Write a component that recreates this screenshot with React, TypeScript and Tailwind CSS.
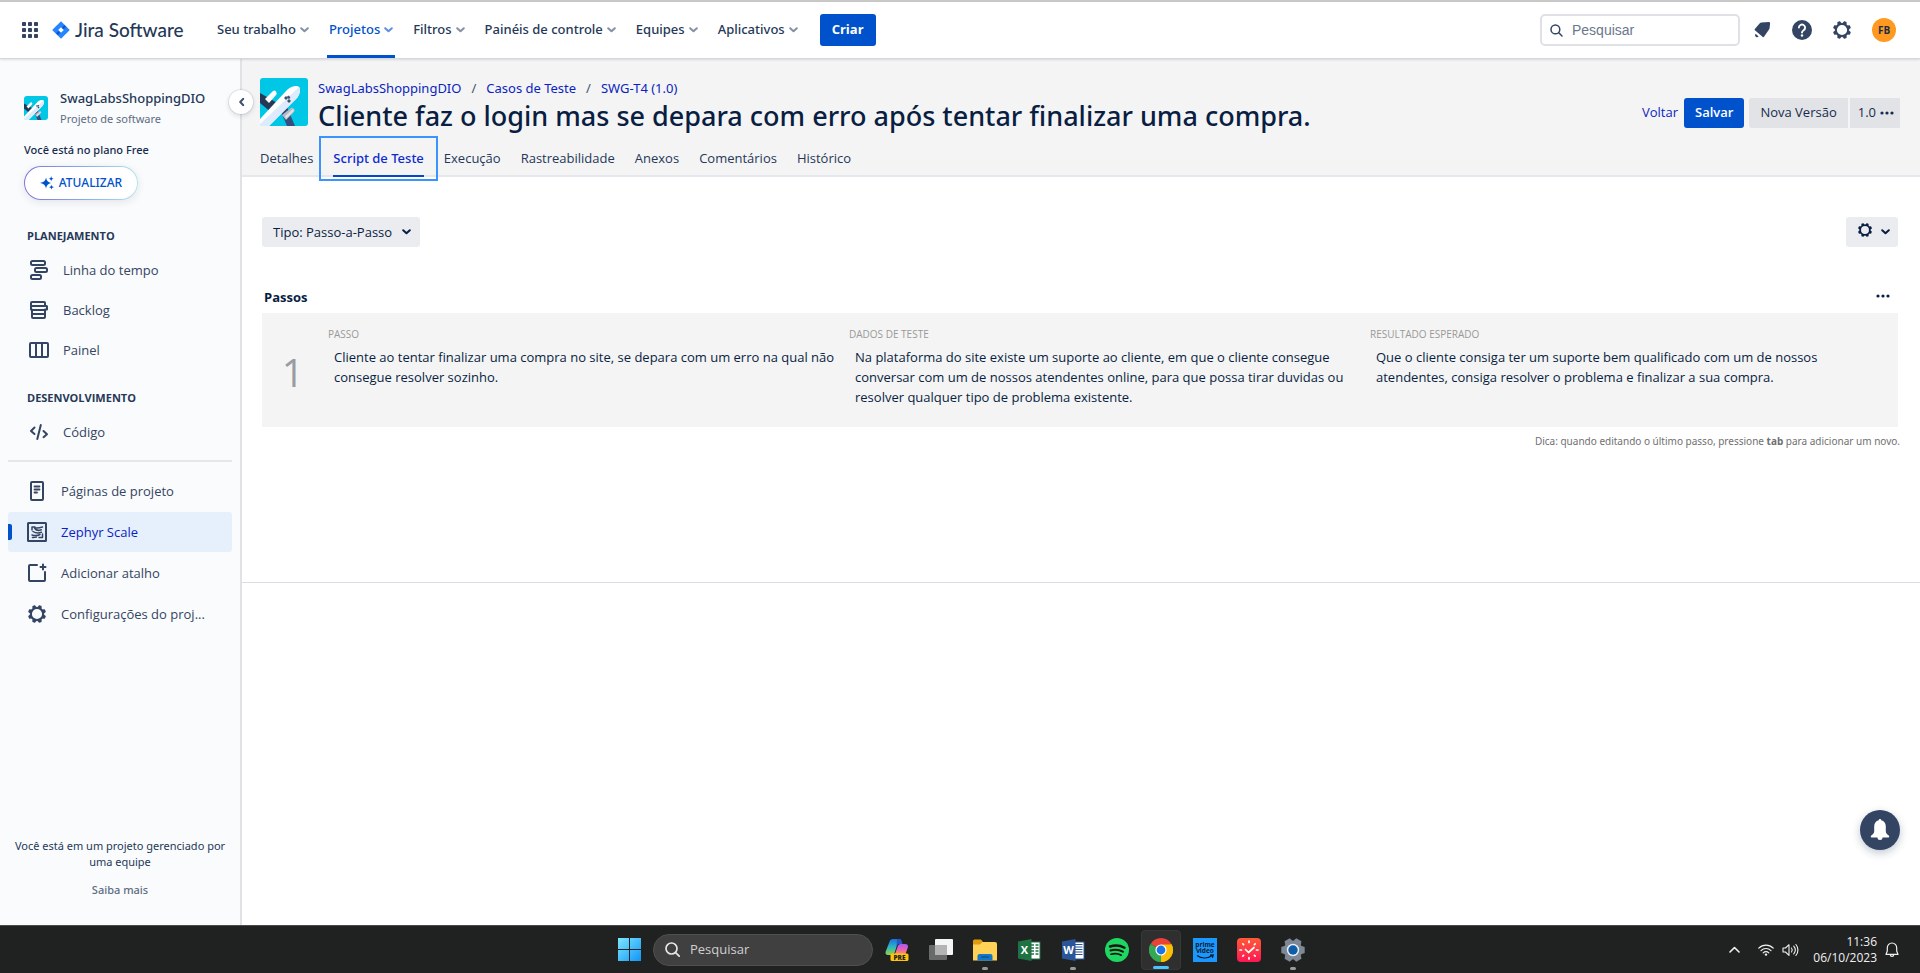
import React from "react";

type IconProps = { className?: string };

const Chevron = ({ className = "" }: IconProps) => (
  <svg viewBox="0 0 9 6" className={`h-[6px] w-[9px] shrink-0 ${className}`} fill="none" stroke="currentColor" strokeWidth="2" strokeLinecap="round" strokeLinejoin="round" aria-hidden="true">
    <path d="M1.2 1.2 4.5 4.3 7.8 1.2" />
  </svg>
);

const Dots = () => (
  <svg viewBox="0 0 14 4" className="h-1 w-[14px] shrink-0" fill="currentColor" aria-hidden="true">
    <circle cx="2" cy="2" r="1.6" />
    <circle cx="7" cy="2" r="1.6" />
    <circle cx="12" cy="2" r="1.6" />
  </svg>
);

const Gear = ({ className = "size-[18px]" }: IconProps) => (
  <svg viewBox="0 0 18 18" className={className} fill="none" aria-hidden="true">
    <circle cx="9" cy="9" r="6.1" stroke="currentColor" strokeWidth="2" />
    <g fill="currentColor">
      {[22.5, 67.5, 112.5, 157.5, 202.5, 247.5, 292.5, 337.5].map((a) => (
        <path key={a} d="M6.6 3 7.6.2Q7.700 0 7.900 0h2.200q.2 0 .3.200L11.400 3z" transform={`rotate(${a} 9 9)`} />
      ))}
    </g>
  </svg>
);

const Plane = ({ className = "" }: IconProps) => (
  <svg viewBox="0 0 48 48" className={`shrink-0 rounded-[3px] ${className}`} aria-hidden="true">
    <rect width="48" height="48" fill="#00C7E6" />
    <path d="M0 15 19 26 12 35 0 25z" fill="#253858" />
    <path d="M21 34 27 29 35 48H27z" fill="#344f7d" />
    <path d="m5 21 8-8c2-2 5 2 3 4l-7 8z" fill="#fff" />
    <path d="m22 37 9-7c2-1 5 2 3 4l-8 8z" fill="#b3bac5" />
    <path d="m25 38 8-7c1 1 1 2 0 3l-7 7z" fill="#dfe1e6" />
    <path d="M0 41 27 12C31 8 37 7 39 9s1 8-3 12L9 48H0z" fill="#fff" />
    <path d="M0 48v-2L39 9c2 2 1 8-3 12L9 48z" fill="#deebff" />
    <path d="m24 20 2-2 2 2-2 2zM27 23l2-2 2 2-2 2zM27 18.500l2-1 1.500 2.500-2 1z" fill="#42526e" />
  </svg>
);

const Waffle = () => (
  <svg viewBox="0 0 16 16" className="size-4" fill="#344563" aria-hidden="true">
    {[0, 6, 12].map((y) => [0, 6, 12].map((x) => <rect key={`${x}-${y}`} x={x} y={y} width="4" height="4" rx=".8" />))}
  </svg>
);

const JiraMark = () => (
  <svg viewBox="0 0 18 18" className="size-[18px]" aria-hidden="true">
    <defs>
      <linearGradient id="jm" x1="0" y1="0" x2="1" y2="1">
        <stop offset="0" stopColor="#2684ff" />
        <stop offset=".42" stopColor="#2684ff" />
        <stop offset=".5" stopColor="#0052cc" />
        <stop offset=".6" stopColor="#2684ff" />
      </linearGradient>
    </defs>
    <path d="M9 .3 17.3 8.4a.9.9 0 0 1 0 1.2L9 17.7.7 9.6a.9.9 0 0 1 0-1.2z" fill="url(#jm)" />
    <path d="M9 6.2 11.8 9 9 11.8 6.2 9z" fill="#fff" />
  </svg>
);

const stroke = { fill: "none", stroke: "currentColor", strokeWidth: 2, strokeLinecap: "round", strokeLinejoin: "round" } as const;

const icons: Record<string, React.ReactNode> = {
  timeline: (
    <g {...stroke}>
      <rect x="2" y="1" width="14" height="4" rx="1.5" />
      <rect x="6" y="8" width="12" height="4" rx="1.5" />
      <rect x="2" y="15" width="10" height="4" rx="1.5" />
    </g>
  ),
  backlog: (
    <g {...stroke}>
      <path d="M3 2h12a1 1 0 0 1 1 1v3h1.500a.6.6 0 0 1 .5.600V9.400H16V17a1 1 0 0 1-1 1H4a1 1 0 0 1-1-1V9.400H2V3a1 1 0 0 1 1-1z" />
      <path d="M2.500 6H16M3 10h13M3 14h13" />
    </g>
  ),
  board: (
    <g {...stroke}>
      <rect x="1" y="3" width="18" height="14" rx="1" />
      <path d="M7 3v14M13 3v14" />
    </g>
  ),
  code: (
    <g {...stroke}>
      <path d="M5.500 5.500 2 9l3.500 3M14.500 9 18 12.200l-3.500 3M11.800 3 8.300 17" />
    </g>
  ),
  page: (
    <g {...stroke}>
      <rect x="4" y="1" width="12" height="18" rx="1" />
      <path strokeWidth="1.800" d="M7.500 5.500h5M7.500 8.500h5M7.500 11.500h2.500" />
    </g>
  ),
  zephyr: (
    <g {...stroke}>
      <rect x="1" y="1" width="18" height="18" rx=".5" />
      <path strokeWidth="1.500" d="M5 8V5h3M15.500 12v3.500H12M15.500 5c-3 1-5 1.300-8 .8 1 2 3.500 3.200 6.800 2M6 9.500c2.500 1.700 5.500 1.800 8.500.8M5 13c3 1 5.500.8 8-.5M5.500 15.500c1.500.2 2.500 0 3.800-.4" />
    </g>
  ),
  add: (
    <g {...stroke}>
      <path d="M10 2H3a1 1 0 0 0-1 1v14a1 1 0 0 0 1 1h14a1 1 0 0 0 1-1V9M16 1.500v5M13.500 4h5" />
    </g>
  ),
};

const SideIcon = ({ name }: { name: string }) =>
  name === "gear" ? (
    <span className="flex size-5 items-center justify-center"><Gear /></span>
  ) : (
    <svg viewBox="0 0 20 20" className="size-5 shrink-0" aria-hidden="true">{icons[name]}</svg>
  );

const navItems = ["Seu trabalho", "Projetos", "Filtros", "Painéis de controle", "Equipes", "Aplicativos"];

function TopBar() {
  return (
    <header className="z-10 flex h-[59px] shrink-0 items-center border-t-2 border-b border-t-[#c8c8c8] border-b-[#d5d7dd] bg-white pr-6 pl-[22px] shadow-[0_1px_2px_rgba(9,30,66,0.12)]">
      <button aria-label="Alternar para"><Waffle /></button>
      <a href="#inicio" className="ml-[14px] flex w-[163px] items-center gap-[5px] text-[#253858]">
        <JiraMark />
        <span className="font-['Lato',sans-serif] text-[19px] leading-6 font-medium whitespace-nowrap">Jira Software</span>
      </a>
      <nav className="flex h-full items-center gap-4">
        {navItems.map((label) => {
          const active = label === "Projetos";
          return (
            <button
              key={label}
              className={`flex h-full items-center gap-1 border-y-[3px] border-t-transparent px-[2px] font-['Noto_Sans',sans-serif] text-[13px] font-medium whitespace-nowrap ${active ? "border-b-[#0052cc] text-[#0052cc]" : "border-b-transparent text-[#253858]"}`}
            >
              {label}
              <Chevron className={active ? "text-[#5b8fe0]" : "text-[#8590a2]"} />
            </button>
          );
        })}
      </nav>
      <button className="ml-5 h-8 rounded-[3px] bg-[#0052cc] px-3 text-[13px] font-bold text-white">Criar</button>
      <label className="ml-auto flex h-8 w-[200px] items-center gap-[9px] rounded-[5px] border-2 border-[#dfe1e6] pl-2">
        <svg viewBox="0 0 13 13" className="size-[13px] shrink-0 text-[#344563]" fill="none" stroke="currentColor" strokeWidth="1.500" strokeLinecap="round" aria-hidden="true">
          <circle cx="5.400" cy="5.400" r="4.400" />
          <path d="m8.800 8.800 3.200 3.200" />
        </svg>
        <input aria-label="Pesquisar" placeholder="Pesquisar" className="w-full bg-transparent font-['Liberation_Sans',sans-serif] text-sm text-[#253858] outline-none placeholder:text-[#6b778c]" />
      </label>
      <div className="ml-[10px] flex items-center gap-4 text-[#344563]">
        <button aria-label="Notificações" className="flex size-6 items-center justify-center">
          <svg viewBox="0 0 18 18" className="size-[18px]" fill="currentColor" aria-hidden="true">
            <path d="M1.800 8 6.800 2.300Q7.500 1.600 8.500 1.500L15.800 1q1.300 0 1.300 1.200L16.600 7q-.1.800-.6 1.500L11 15.800q-.5.700-1.200.1L1.900 9.200q-.6-.5-.1-1.200z" />
            <path d="M2.600 12.800a1.900 1.900 0 0 0 3 2.700z" />
          </svg>
        </button>
        <button aria-label="Ajuda" className="flex size-6 items-center justify-center">
          <svg viewBox="0 0 20 20" className="size-5" aria-hidden="true">
            <circle cx="10" cy="10" r="10" fill="currentColor" />
            <path d="M6.900 7.600a3.100 3.100 0 1 1 4.700 2.700c-1 .6-1.600 1.100-1.600 2.300" fill="none" stroke="#fff" strokeWidth="1.900" strokeLinecap="round" />
            <circle cx="10" cy="15.500" r="1.200" fill="#fff" />
          </svg>
        </button>
        <button aria-label="Configurações" className="flex size-6 items-center justify-center"><Gear /></button>
        <button aria-label="Seu perfil" className="ml-[2px] size-6 rounded-full bg-[#ff991f] text-center text-[10px] leading-6 font-bold text-[#172b4d]">FB</button>
      </div>
    </header>
  );
}

function SideLink({ icon, label, selected, inset = "pl-[29px] gap-[14px]" }: { icon: string; label: string; selected?: boolean; inset?: string }) {
  return (
    <a
      href={`#${icon}`}
      className={`relative flex h-10 items-center text-[13px] ${inset} ${selected ? "rounded-[3px] bg-[#e6effc] text-[#0c1fc0]" : "text-[#344563]"}`}
    >
      {selected && <span className="absolute left-0 h-4 w-1 rounded-r-[2px] bg-[#0052cc]" />}
      <span className="text-[#344563]"><SideIcon name={icon} /></span>
      <span className="pt-[2px]">{label}</span>
    </a>
  );
}

function Sidebar() {
  const lower = "pl-[19px] gap-[14px]";
  return (
    <aside className="relative flex w-[242px] shrink-0 flex-col border-r-2 border-[#e1e2e6] bg-[#fafbfc] pt-7">
      <div className="flex items-center gap-3 pl-6">
        <Plane className="size-6" />
        <div className="font-['Noto_Sans',sans-serif]">
          <p className="text-[13px] leading-[22px] font-medium text-[#253858]">SwagLabsShoppingDIO</p>
          <p className="text-[11px] leading-5 text-[#5e6c84]">Projeto de software</p>
        </div>
      </div>
      <p className="mt-[11px] pl-6 font-['Noto_Sans',sans-serif] text-[11px] leading-5 font-medium text-[#172b4d]">Você está no plano Free</p>
      <button className="mt-[6px] ml-6 h-[34px] w-[114px] rounded-full bg-linear-to-r from-[#8270db] via-[#85a9ec] to-[#b5e4ea] p-px shadow-[0_2px_8px_rgba(9,30,66,0.10)]">
        <span className="flex h-full items-center justify-center gap-[5px] rounded-full bg-white font-['Noto_Sans',sans-serif] text-xs font-medium text-[#0052cc]">
          <svg viewBox="0 0 14 14" className="size-[14px]" fill="currentColor" aria-hidden="true">
            <path d="M6 1.600C6.700 5 8 6.200 11 7 8 7.800 6.700 9 6 12.400 5.300 9 4 7.800 0 7 4 6.200 5.300 5 6 1.600z" />
            <path d="M11.200 0c.3 1.800.9 2.400 2.700 2.700-1.800.3-2.400.9-2.700 2.700-.3-1.800-.9-2.400-2.700-2.700C10.300 2.400 10.900 1.800 11.200 0zM11.500 8.600c.2 1.600.8 2.300 2.500 2.600-1.700.3-2.300 1-2.500 2.600-.2-1.600-.8-2.300-2.500-2.600 1.700-.3 2.300-1 2.500-2.600z" />
          </svg>
          ATUALIZAR
        </span>
      </button>
      <h2 className="mt-[26px] mb-1 pl-[27px] text-[11px] leading-5 font-bold text-[#253858]">PLANEJAMENTO</h2>
      <SideLink icon="timeline" label="Linha do tempo" />
      <SideLink icon="backlog" label="Backlog" />
      <SideLink icon="board" label="Painel" />
      <h2 className="mt-[18px] mb-1 pl-[27px] text-[11px] leading-5 font-bold text-[#253858]">DESENVOLVIMENTO</h2>
      <SideLink icon="code" label="Código" />
      <div className="mx-2 mt-2 flex flex-col gap-px border-t-2 border-[#e4e6ea] pt-[9px]">
        <SideLink icon="page" label="Páginas de projeto" inset={lower} />
        <SideLink icon="zephyr" label="Zephyr Scale" selected inset={lower} />
        <SideLink icon="add" label="Adicionar atalho" inset={lower} />
        <SideLink icon="gear" label="Configurações do proj..." inset={lower} />
      </div>
      <div className="mt-auto px-2 pb-[27px] text-center font-['Noto_Sans',sans-serif] text-[11px] leading-4 text-[#253858]">
        <p>Você está em um projeto gerenciado por uma equipe</p>
        <a href="#saiba" className="mt-3 block font-medium text-[#5e6c84]">Saiba mais</a>
      </div>
      <button aria-label="Recolher barra lateral" className="absolute top-[31px] -right-[13px] z-10 flex size-6 items-center justify-center rounded-full bg-white text-[#42526e] shadow-[0_0_0_1px_rgba(9,30,66,0.08),0_2px_4px_1px_rgba(9,30,66,0.10)]">
        <Chevron className="rotate-90" />
      </button>
    </aside>
  );
}

const tabs = ["Detalhes", "Script de Teste", "Execução", "Rastreabilidade", "Anexos", "Comentários", "Histórico"];

function CaseHeader() {
  return (
    <div className="border-b-2 border-[#e6e7ec] bg-[#f4f4f4] pt-[19px] pr-5 pl-[18px]">
      <div className="flex gap-[10px]">
        <Plane className="size-12" />
        <div className="font-['Noto_Sans',sans-serif]">
          <nav className="flex gap-[10px] text-[13px] leading-5 text-[#0c1fc0]">
            <a href="#projeto">SwagLabsShoppingDIO</a>
            <span className="text-[#42526e]">/</span>
            <a href="#casos">Casos de Teste</a>
            <span className="text-[#42526e]">/</span>
            <a href="#swg-t4">SWG-T4 (1.0)</a>
          </nav>
          <h1 className="text-[27px] leading-9 font-medium text-[#091e42]">Cliente faz o login mas se depara com erro após tentar finalizar uma compra.</h1>
        </div>
        <div className="mt-5 ml-auto flex h-[30px] items-center text-[13px] text-[#172b4d]">
          <a href="#voltar" className="mr-[6px] text-[#0c1fc0]">Voltar</a>
          <button className="mr-[5px] h-full rounded-[3px] bg-[#0052cc] px-[11px] font-semibold text-white">Salvar</button>
          <button className="mr-[2px] h-full rounded-l-[3px] bg-[#e2e3e7] px-[11px]">Nova Versão</button>
          <button className="flex h-full items-center gap-1 rounded-r-[1px] bg-[#e2e3e7] pr-[6px] pl-2 text-[#172b4d]">1.0 <Dots /></button>
        </div>
      </div>
      <div role="tablist" className="-mb-[2px] flex gap-5 pt-2 text-[13px] leading-5">
        {tabs.map((t) => {
          const on = t === "Script de Teste";
          return (
            <button
              key={t}
              role="tab"
              aria-selected={on}
              className={`relative border-b-2 pt-[6px] pb-[7px] ${on ? "border-[#0747c6] font-['Noto_Sans',sans-serif] font-medium text-[#0c2bd0]" : "border-transparent text-[#253858]"}`}
            >
              {t}
              {on && <span className="absolute -inset-x-[14px] -top-[6px] -bottom-[6px] border-2 border-[#3b93ff]" />}
            </button>
          );
        })}
      </div>
    </div>
  );
}

const step = [
  ["PASSO", "Cliente ao tentar finalizar uma compra no site, se depara com um erro na qual não consegue resolver sozinho."],
  ["DADOS DE TESTE", "Na plataforma do site existe um suporte ao cliente, em que o cliente consegue conversar com um de nossos atendentes online, para que possa tirar duvidas ou resolver qualquer tipo de problema existente."],
  ["RESULTADO ESPERADO", "Que o cliente consiga ter um suporte bem qualificado com um de nossos atendentes, consiga resolver o problema e finalizar a sua compra."],
];

function ScriptPanel() {
  return (
    <section className="border-b border-[#dcdde5] pt-10 pr-[22px] pb-[131px] pl-5 text-[#091e42]">
      <div className="flex justify-between">
        <div className="relative flex items-center">
          <select aria-label="Tipo de script" className="h-[30px] w-[158px] appearance-none rounded-[3px] bg-[#ebecf0] pt-[2px] pl-[11px] text-[13px]">
            <option>Tipo: Passo-a-Passo</option>
          </select>
          <Chevron className="pointer-events-none absolute right-[9px]" />
        </div>
        <button aria-label="Opções do script" className="flex h-[30px] w-[52px] items-center justify-center gap-[9px] rounded-[3px] bg-[#ebecf0] pl-1">
          <Gear className="mb-1 size-[14px]" />
          <Chevron />
        </button>
      </div>
      <div className="mt-10 flex h-5 items-center justify-between pr-2 pl-[2px]">
        <h2 className="pt-[2px] text-[13px] font-bold">Passos</h2>
        <button aria-label="Mais ações" className="pb-[3px]"><Dots /></button>
      </div>
      <table className="mt-[6px] w-full table-fixed bg-[#f4f4f4] text-left">
        <colgroup>
          <col className="w-[66px]" />
          <col />
          <col />
          <col />
          <col className="w-[7px]" />
        </colgroup>
        <tbody>
          <tr>
            <th rowSpan={2} scope="rowgroup" className="pt-1 pr-1 text-center align-middle text-[39px] leading-10 font-normal text-[#999da3]">1</th>
            {step.map(([h]) => (
              <th key={h} scope="col" className="pt-[11px] text-[10px] leading-5 font-normal text-[#999]">{h}</th>
            ))}
            <td />
          </tr>
          <tr>
            {step.map(([h, text]) => (
              <td key={h} className="h-[83px] pt-[3px] pr-3 pb-5 pl-[6px] align-top text-[13px] leading-5 whitespace-normal">{text}</td>
            ))}
            <td />
          </tr>
        </tbody>
      </table>
      <p className="-mr-[2px] mt-1 text-right font-['Noto_Sans',sans-serif] text-[10px] leading-5 text-[#707070]">
        Dica: quando editando o último passo, pressione <b>tab</b> para adicionar um novo.
      </p>
    </section>
  );
}

const OfficeIcon = ({ letter, dark, mid }: { letter: string; dark: string; mid: string }) => (
  <svg viewBox="0 0 24 24" className="size-6" aria-hidden="true">
    <rect x="11" y="4" width="12" height="17" fill="#fff" stroke={mid} strokeWidth="1" />
    {letter === "X" ? (
      <path d="M14 7h3M18.500 7h3M14 10h3M18.500 10h3M14 13h3M18.500 13h3M14 16h3M18.500 16h3" stroke={mid} strokeWidth="1.600" />
    ) : (
      <path d="M14 6.500h7.500M14 9h7.500M14 11.500h7.500M14 14h7.500M14 16.500h7.500" stroke={mid} strokeWidth="1.100" />
    )}
    <path d="M1 3.500 14.500 1v22L1 20.500z" fill={dark} />
    <text x="7.500" y="16" textAnchor="middle" fontSize="11" fontWeight="700" fill="#fff">{letter}</text>
  </svg>
);

const CopilotIcon = () => (
  <svg viewBox="0 0 24 24" className="size-6" aria-hidden="true">
    <defs>
      <linearGradient id="cp1" x1="0" y1="0" x2="0" y2="1"><stop stopColor="#1e6fe0" /><stop offset=".5" stopColor="#2bb6c4" /><stop offset="1" stopColor="#9bd23c" /></linearGradient>
      <linearGradient id="cp2" x1="0" y1="0" x2="0" y2="1"><stop stopColor="#a45cf0" /><stop offset=".5" stopColor="#e35cc0" /><stop offset="1" stopColor="#ff9055" /></linearGradient>
    </defs>
    <path d="M5 2.500C6 1 7 1 8.500 1H16l-3 3-3.500 11c-.5 1.500-1.500 2-3 2H3c-2 0-3-1.500-2.300-3.500z" fill="url(#cp1)" />
    <path d="M13 7.500C14 6 15 6 16.500 6H20c2.500 0 3.500 1.500 2.800 3.500L20.500 16H10z" fill="url(#cp2)" />
    <path d="M12 1h2.500c1.500 0 2 1 2.500 3l.5 2h-3c-2 0-2.500 1.500-3 3z" fill="#2457c5" />
    <rect x="5.500" y="15.500" width="18" height="7.500" rx="1.500" fill="#ffc40c" />
    <text x="14.500" y="21.700" textAnchor="middle" fontSize="6.500" fontWeight="800" fill="#222">PRE</text>
  </svg>
);

const apps: { name: string; art: React.ReactNode; state?: "open" | "active" }[] = [
  { name: "Copilot", art: <CopilotIcon /> },
  {
    name: "Visão de tarefas",
    art: (
      <svg viewBox="0 0 24 24" className="size-6" aria-hidden="true">
        <rect x="6" y="1" width="18" height="16" rx="1" fill="#f5f5f5" />
        <rect x="0" y="7" width="18" height="15" rx="1" fill="#777" fillOpacity=".85" />
        <path d="M6 7h12v10H6z" fill="#b4b4b4" />
      </svg>
    ),
  },
  {
    name: "Explorador de Arquivos",
    state: "open",
    art: (
      <svg viewBox="0 0 24 24" className="size-6" aria-hidden="true">
        <path d="M0 3a1.500 1.500 0 0 1 1.500-1.500H8L10 4v3H0z" fill="#e09c10" />
        <path d="M0 6.500h7L9.500 4H22a2 2 0 0 1 2 2v16.500H0z" fill="#ffd257" />
        <path d="M4.500 22.500V18a2 2 0 0 1 2-2h11a2 2 0 0 1 2 2v4.500z" fill="#1277c9" />
        <path d="M8 19h8" stroke="#0a4d8c" strokeWidth="1.200" />
      </svg>
    ),
  },
  { name: "Excel", art: <OfficeIcon letter="X" dark="#1f7244" mid="#1f7244" /> },
  { name: "Word", state: "open", art: <OfficeIcon letter="W" dark="#2a5699" mid="#2a5699" /> },
  {
    name: "Spotify",
    art: (
      <svg viewBox="0 0 24 24" className="size-6" fill="none" strokeLinecap="round" aria-hidden="true">
        <circle cx="12" cy="12" r="12" fill="#1ed760" />
        <path d="M5 8.500c5-1.500 10.500-1 14.500 1.200" stroke="#191414" strokeWidth="2.400" />
        <path d="M5.500 12.500c4.300-1.300 8.800-.8 12.400 1.200" stroke="#191414" strokeWidth="2" />
        <path d="M6 16.200c3.600-1 7.300-.7 10.300 1" stroke="#191414" strokeWidth="1.700" />
      </svg>
    ),
  },
  {
    name: "Chrome",
    state: "active",
    art: (
      <svg viewBox="0 0 24 24" className="size-6" aria-hidden="true">
        <path d="M12 12 1.610 6A12 12 0 0 1 22.390 6z" fill="#ea4335" />
        <path d="M12 12 22.390 6A12 12 0 0 1 12 24z" fill="#fbbc04" />
        <path d="M12 12v12A12 12 0 0 1 1.610 6z" fill="#34a853" />
        <path d="M12 6.500h10.650A12 12 0 0 1 12 24l4.800-9.200z" fill="#fbbc04" />
        <path d="M1.610 6 7.200 14.800 12 17.500 10 23.800A12 12 0 0 1 1.610 6z" fill="#34a853" />
        <circle cx="12" cy="12" r="5.600" fill="#fff" />
        <circle cx="12" cy="12" r="4.400" fill="#1a73e8" />
      </svg>
    ),
  },
  {
    name: "Prime Video",
    art: (
      <svg viewBox="0 0 24 24" className="size-6" aria-hidden="true">
        <rect width="24" height="24" fill="#1a98ff" />
        <text x="12" y="8.500" textAnchor="middle" fontSize="6.500" fontWeight="700" fill="#0b1b2b">prime</text>
        <text x="12" y="15" textAnchor="middle" fontSize="6.500" fontWeight="700" fill="#0b1b2b">video</text>
        <path d="M4 17.500c4.500 3.300 10.500 3.300 15 .3M17 17.200l3.200-.2-.8 2.800" stroke="#0b1b2b" strokeWidth="1.200" fill="none" />
      </svg>
    ),
  },
  {
    name: "Relógio",
    art: (
      <svg viewBox="0 0 24 24" className="size-6" fill="none" stroke="#fff" strokeLinecap="round" aria-hidden="true">
        <defs><linearGradient id="ck" x1="0" y1="0" x2="0" y2="1"><stop stopColor="#ff5a36" /><stop offset="1" stopColor="#ff1654" /></linearGradient></defs>
        <rect width="24" height="24" rx="4" fill="url(#ck)" stroke="none" />
        <path d="M12 3v1.500M12 19.500V21M3 12h1.500M19.500 12H21M5.800 5.800l.8.800M17.400 17.400l.8.800M5.800 18.200l.8-.8M17.400 6.600l.8-.8" strokeWidth="1.700" />
        <path d="m8.500 11.500 3 3L17 9.500" strokeWidth="1.700" strokeLinejoin="round" />
      </svg>
    ),
  },
  {
    name: "Configurações do Windows",
    state: "open",
    art: (
      <svg viewBox="0 0 24 24" className="size-6" aria-hidden="true">
        <g fill="#7d8894">
          <circle cx="12" cy="12" r="9.300" />
          {[0, 60, 120, 180, 240, 300].map((a) => (
            <path key={a} d="M7.500 4.500 9 .3h6l1.500 4.200z" transform={`rotate(${a + 30} 12 12)`} />
          ))}
        </g>
        <circle cx="12" cy="12" r="6.200" fill="#e8eef4" />
        <circle cx="12" cy="12" r="4.700" fill="#0f5da8" />
      </svg>
    ),
  },
];

function Taskbar() {
  return (
    <footer className="grid h-12 shrink-0 grid-cols-[1fr_auto_1fr] items-center border-t border-[#4a4a4a] bg-[#202121] text-[#f1f1f1]">
      <div />
      <div className="flex items-center gap-1 pl-[2px]">
        <button aria-label="Iniciar" className="flex size-10 items-center justify-center">
          <svg viewBox="0 0 23 23" className="size-[23px]" aria-hidden="true">
            <defs><linearGradient id="wn" x1="0" y1="0" x2="1" y2="1"><stop stopColor="#7ee7ff" /><stop offset="1" stopColor="#1194f6" /></linearGradient></defs>
            <path d="M0 0h11v11H0zM12 0h11v11H12zM0 12h11v11H0zM12 12h11v11H12z" fill="url(#wn)" />
          </svg>
        </button>
        <label className="flex h-8 w-[220px] items-center gap-[10px] rounded-full border border-[#4f4f50] bg-[#404041] pl-[11px]">
          <svg viewBox="0 0 15 15" className="size-[15px] shrink-0" fill="none" stroke="#e6e6e6" strokeWidth="1.700" strokeLinecap="round" aria-hidden="true">
            <circle cx="6.500" cy="6.500" r="5.500" />
            <path d="m10.600 10.600 3.600 3.600" />
          </svg>
          <input aria-label="Pesquisar no Windows" placeholder="Pesquisar" className="w-full bg-transparent pr-4 text-[13px] outline-none placeholder:text-[#d0d0d0]" />
        </label>
        {apps.map((a) => (
          <button
            key={a.name}
            aria-label={a.name}
            className={`relative flex size-10 items-center justify-center rounded ${a.state === "active" ? "border border-[#383838] bg-[#2f2f2f]" : ""}`}
          >
            {a.art}
            {a.state === "open" && <span className="absolute bottom-0 h-[3px] w-[6px] rounded-full bg-[#9a9a9a]" />}
            {a.state === "active" && <span className="absolute bottom-0 h-[3px] w-4 rounded-full bg-[#4cc2ff]" />}
          </button>
        ))}
      </div>
      <div className="flex items-center justify-end pr-[21px]">
        <button aria-label="Mostrar ícones ocultos" className="mr-[18px]">
          <svg viewBox="0 0 11 7" className="h-[7px] w-[11px]" fill="none" stroke="currentColor" strokeWidth="1.600" strokeLinecap="round" strokeLinejoin="round" aria-hidden="true"><path d="m1 6 4.500-4.500L10 6" /></svg>
        </button>
        <button aria-label="Rede e som" className="mr-[14px] flex items-center gap-2">
          <svg viewBox="0 0 16 12" className="h-3 w-4" fill="none" stroke="currentColor" strokeWidth="1.200" strokeLinecap="round" aria-hidden="true">
            <path d="M.8 4.200c4-4 10.400-4 14.400 0M3 6.600c2.800-2.800 7.200-2.800 10 0M5.200 8.900c1.600-1.600 4-1.600 5.600 0" />
            <circle cx="8" cy="10.600" r="1.200" fill="currentColor" stroke="none" />
          </svg>
          <svg viewBox="0 0 17 14" className="h-[14px] w-[17px]" fill="none" stroke="currentColor" strokeWidth="1.100" strokeLinecap="round" strokeLinejoin="round" aria-hidden="true">
            <path d="M1 5v4h2.500L7 12.300V1.700L3.500 5zM9.500 5c.9 1.200.9 2.800 0 4M11.700 3.200c1.900 2.200 1.900 5.400 0 7.600M13.900 1.500c2.700 3.200 2.700 7.800 0 11" />
          </svg>
        </button>
        <button className="text-right text-xs leading-4"><span className="block">11:36</span><span className="block">06/10/2023</span></button>
        <button aria-label="Central de notificações" className="ml-2">
          <svg viewBox="0 0 14 16" className="h-4 w-[14px]" fill="none" stroke="currentColor" strokeWidth="1.200" strokeLinejoin="round" aria-hidden="true">
            <path d="M7 1a4.700 4.700 0 0 0-4.700 4.700V9L1 12.400h12L11.700 9V5.700A4.700 4.700 0 0 0 7 1zM5.300 12.700a1.700 1.700 0 0 0 3.400 0" />
          </svg>
        </button>
      </div>
    </footer>
  );
}

export default function App() {
  return (
    <div className="flex min-h-screen flex-col bg-white font-['Open_Sans',sans-serif]">
      <TopBar />
      <div className="flex flex-1">
        <Sidebar />
        <main className="relative min-w-0 flex-1">
          <CaseHeader />
          <ScriptPanel />
          <button aria-label="Alertas" className="absolute right-5 bottom-[75px] flex size-10 items-center justify-center rounded-full bg-[#344563] shadow-[0_3px_8px_rgba(9,30,66,0.25)]">
            <svg viewBox="0 0 20 22" className="h-[22px] w-5" fill="#fff" aria-hidden="true">
              <path d="M10 0c.8 0 1.300.6 1.300 1.300 2.900.7 4.500 3.200 4.500 6.200v4.800c0 1.800 1.200 3 2.600 3.900.5.300.8.700.8 1.200 0 .6-.4 1-1 1H12.500a2.500 2.500 0 0 1-5 0H1.800c-.6 0-1-.4-1-1 0-.5.300-.9.800-1.200 1.400-.9 2.600-2.100 2.600-3.900V7.500c0-3 1.600-5.500 4.500-6.200C8.700.6 9.200 0 10 0z" />
            </svg>
          </button>
        </main>
      </div>
      <Taskbar />
    </div>
  );
}
